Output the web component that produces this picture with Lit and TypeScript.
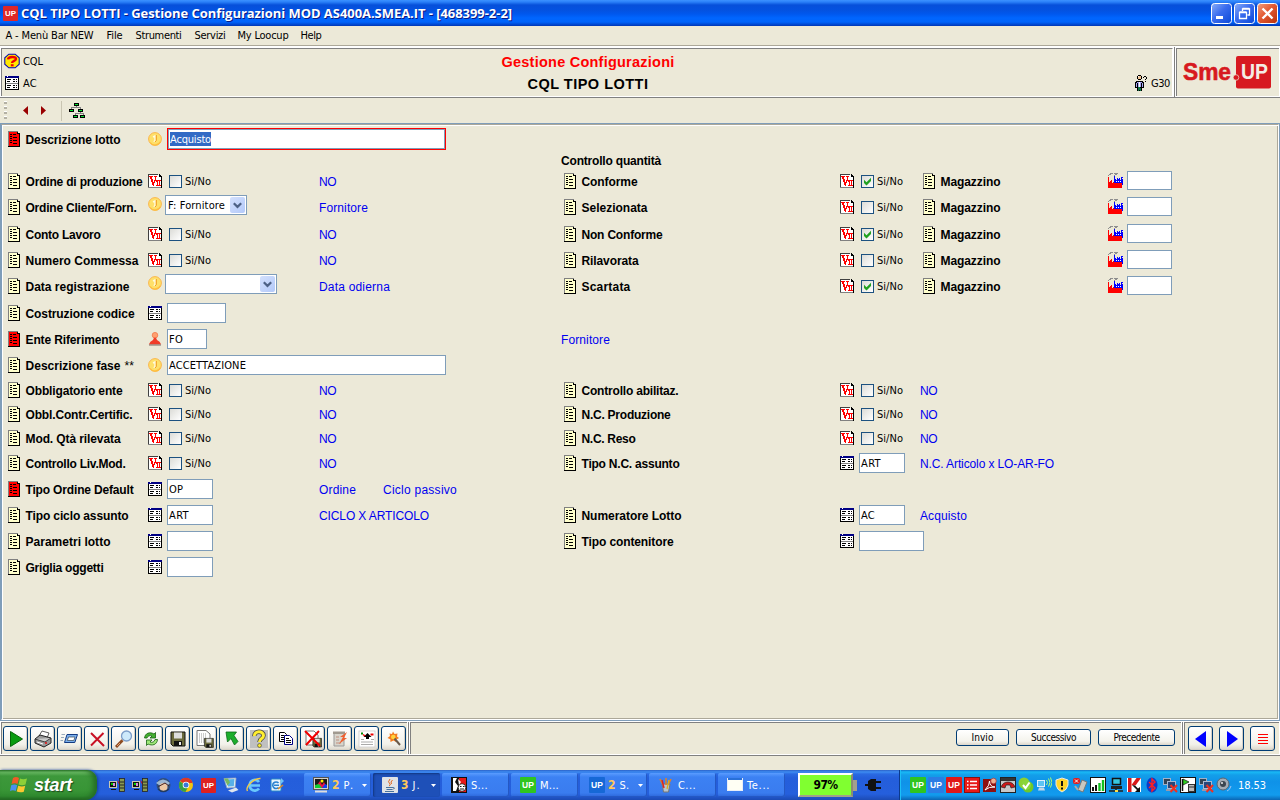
import { LitElement, html, svg, css, nothing } from "lit";
import { customElement, property } from "lit/decorators.js";

/* Text run whose letter spacing is adjusted so that it takes a given width. */
@customElement("fit-text")
class FitText extends LitElement {
  @property() text = "";
  @property({ type: Number }) w = 0;
  static styles = css`
    :host { display: block; white-space: pre; flex: none; }
    .run { display: inline-block; }
  `;
  render() { return html`<span class="run">${this.text}</span>`; }
  updated() {
    const s = this.renderRoot.querySelector(".run") as HTMLElement;
    s.style.letterSpacing = "0px";
    const n = s.getBoundingClientRect().width;
    if (this.w) s.style.letterSpacing = ((this.w - n) / this.text.length).toFixed(3) + "px";
  }
}

const fit = (text: string, w = 0, cls = "") => html`<fit-text class=${cls} .text=${text} .w=${w}></fit-text>`;

const PAL: Record<string, string> = {
  k: "#000", g: "#808080", y: "#ffffcc", w: "#fff", r: "#f00", n: "#000084", d: "#404040",
  b: "#0000ff", G: "#00e030", o: "#f4c898", v: "#a9a9f4", e: "#107848", c: "#8e8e8e",
};
/* Bitmap glyph: one character for each pixel, dots are transparent. */
const px = (rows: string[], over: Record<string, string> = {}) => {
  const w = Math.max(...rows.map((r) => r.length));
  const out: unknown[] = [];
  rows.forEach((row, y) => {
    let x = 0;
    while (x < row.length) {
      const c = row[x];
      let e = x + 1;
      while (e < row.length && row[e] === c) e++;
      if (c !== ".") out.push(svg`<rect x=${x} y=${y} width=${e - x} height="1" fill=${over[c] ?? PAL[c]}/>`);
      x = e;
    }
  });
  return html`<svg width=${w} height=${rows.length} viewBox="0 0 ${w} ${rows.length}" shape-rendering="crispEdges">${out}</svg>`;
};

const DOC = [
  "gggggggggg..",
  "gyyyyyyyyk..",
  "gyyyyyyyykkk",
  "gykkykkkyyyk",
  "gyyyyyyyyyyk",
  "gykkyyyyyyyk",
  "gyyyykkkkyyk",
  "gykkyyyyyyyk",
  "gyyyyyyyyyyk",
  "gykkykkkkyyk",
  "gyyyyyyyyyyk",
  "gykkyyyyyyyk",
  "gyyyykkkkyyk",
  "gyyyyyyyyyyk",
  "gyyyyyyyyyyk",
  "kkkkkkkkkkkk",
];
const doc = (red = false) => px(DOC, red ? { y: "#ff0000" } : {});
const table = () => px([
  "nnwnnnnnnnnnnn",
  "nnnnnnnnnnnnnn",
  "kwwwwwwwwwwwwk",
  "kwkkkkwwkkwkwk",
  "kwwwwwwwwwwwwk",
  "kwkkkwwwkkwkwk",
  "kwwwwwwwwwwwwk",
  "kggggggggggggk",
  "kwwwwwwwwwwwwk",
  "kwkkkkwwkkwkwk",
  "kwwwwwwwwwwwwk",
  "kwkkkwwwkkwkwk",
  "kwwwwwwwwwwwwk",
  "kkkkkkkkkkkkkk",
]);
const vee = () => px([
  "dddddddddd.k..",
  "dwwwwwwwwwwkk.",
  "drrrrwrrrwwkkk",
  "dwrrwwwrwwwwwk",
  "dwrrwwwrwwwwwk",
  "dwwrrwwrwwwwwk",
  "dwwrrwrrrrrrrk",
  "dwwrrwrwrrwrwk",
  "dwwwrrrwwrwrwk",
  "dwwwrrwwwrwrwk",
  "dwwwrrwwwrwrwk",
  "dwwwwrwwrrrrrk",
  "dwwwwwwwwwwwwk",
  "gggggggggggggk",
]);
const factory = () => px([
  "..ccc.cccc.....",
  ".cc....cc......",
  "c.....c........",
  "......b........",
  "r.....b......bb",
  "r.....b..b.b.b.",
  "r.....bb.bbb.bb",
  "r..r..bbbbbbbbb",
  "r.rr..bbwbwbwbb",
  "rrrr.rbbbbbbbbb",
  "rrrrrrrrrrrrrrb",
  "rrrrrrrrrrrrrrb",
  "rrrrrrrrrrrrrr.",
  "rrrrrrrrrrrrrr.",
  "rrrrrrrrrrrrrr.",
]);
const coin = () => html`<svg width="14" height="14" viewBox="0 0 14 14"><circle cx="7" cy="7" r="6.4" fill="#fee06a" stroke="#fab64d"/><path d="M2.2 10.5A6 6 0 0 0 12.5 9.5" stroke="#ffbe3e" stroke-width="1.2" fill="none"/><path d="M5 5L7 4V8.400Q6.800 9.500 5.600 9.400" stroke="#fffbe0" stroke-width="1.400" fill="none"/><path d="M8.300 3V8.500L7 10" stroke="#f09c20" stroke-width="1" fill="none"/></svg>`;
const person = () => html`<svg width="14" height="14" viewBox="0 0 14 14"><circle cx="7" cy="3.2" r="2.8" fill="#ffa070" stroke="#f07040" stroke-width=".7"/><path d="M.800 12.500Q2 9 5 8L6 5.800H8L9 8Q12 9 13.200 12.500Z" fill="#f03c28"/><path d="M1 13h12" stroke="#8a8078" stroke-width="1.2"/></svg>`;

const GLYPH: Record<string, () => unknown> = { V: vee, T: table, C: coin, P: person };

interface Half {
  label: string; lw: number; icon: string; red?: boolean;
  check?: boolean; input?: number; val?: string; vw?: number; combo?: number; star?: boolean; focus?: boolean;
  note?: string; nw?: number; note2?: string; mag?: boolean;
}
interface Row { h: number; left?: Half; right?: Half; head?: string; mid?: string; }

const ROWS: Row[] = [
  { h: 21, left: { label: "Descrizione lotto", lw: 95, icon: "C", red: true, input: 279, val: "Acquisto", vw: 41, focus: true } },
  { h: 21, head: "Controllo quantità" },
  { h: 26, left: { label: "Ordine di produzione", lw: 117, icon: "V", check: false, note: "NO", nw: 17 }, right: { label: "Conforme", lw: 56, icon: "V", check: true, mag: true } },
  { h: 27, left: { label: "Ordine Cliente/Forn.", lw: 111, icon: "C", combo: 82, val: "F: Fornitore", vw: 57, note: "Fornitore", nw: 49 }, right: { label: "Selezionata", lw: 66, icon: "V", check: false, mag: true } },
  { h: 26, left: { label: "Conto Lavoro", lw: 75, icon: "V", check: false, note: "NO", nw: 17 }, right: { label: "Non Conforme", lw: 81, icon: "V", check: true, mag: true } },
  { h: 26, left: { label: "Numero Commessa", lw: 113, icon: "V", check: false, note: "NO", nw: 17 }, right: { label: "Rilavorata", lw: 57, icon: "V", check: false, mag: true } },
  { h: 27, left: { label: "Data registrazione", lw: 104, icon: "C", combo: 112, note: "Data odierna", nw: 71 }, right: { label: "Scartata", lw: 49, icon: "V", check: true, mag: true } },
  { h: 26, left: { label: "Costruzione codice", lw: 109, icon: "T", input: 59 } },
  { h: 26, left: { label: "Ente Riferimento", lw: 94, icon: "P", red: true, input: 40, val: "FO", vw: 14 }, mid: "Fornitore" },
  { h: 25, left: { label: "Descrizione fase", lw: 95, icon: "C", star: true, input: 279, val: "ACCETTAZIONE", vw: 77 } },
  { h: 24, left: { label: "Obbligatorio ente", lw: 97, icon: "V", check: false, note: "NO", nw: 17 }, right: { label: "Controllo abilitaz.", lw: 97, icon: "V", check: false, note: "NO", nw: 17 } },
  { h: 24, left: { label: "Obbl.Contr.Certific.", lw: 107, icon: "V", check: false, note: "NO", nw: 17 }, right: { label: "N.C. Produzione", lw: 89, icon: "V", check: false, note: "NO", nw: 17 } },
  { h: 25, left: { label: "Mod. Qtà rilevata", lw: 95, icon: "V", check: false, note: "NO", nw: 17 }, right: { label: "N.C. Reso", lw: 54, icon: "V", check: false, note: "NO", nw: 17 } },
  { h: 26, left: { label: "Controllo Liv.Mod.", lw: 100, icon: "V", check: false, note: "NO", nw: 17 }, right: { label: "Tipo N.C. assunto", lw: 98, icon: "T", input: 46, val: "ART", vw: 20, note: "N.C. Articolo x LO-AR-FO", nw: 134 } },
  { h: 26, left: { label: "Tipo Ordine Default", lw: 108, icon: "T", red: true, input: 46, val: "OP", vw: 14, note: "Ordine", nw: 37, note2: "Ciclo passivo" } },
  { h: 26, left: { label: "Tipo ciclo assunto", lw: 103, icon: "T", input: 46, val: "ART", vw: 20, note: "CICLO X ARTICOLO", nw: 110 }, right: { label: "Numeratore Lotto", lw: 100, icon: "T", input: 46, val: "AC", vw: 14, note: "Acquisto", nw: 47 } },
  { h: 26, left: { label: "Parametri lotto", lw: 85, icon: "T", input: 46 }, right: { label: "Tipo contenitore", lw: 92, icon: "T", input: 65 } },
  { h: 26, left: { label: "Griglia oggetti", lw: 78, icon: "T", input: 46 } },
];

const svgi = (size: number, body: unknown) => html`<svg width=${size} height=${size} viewBox="0 0 20 20">${body}</svg>`;

const floppy = svg`<path d="M3 3H17V17H5L3 15Z" fill="#6b6a3c" stroke="#111"/><rect x="6" y="3.500" width="8" height="6" fill="#ddd"/><rect x="6" y="12" width="8" height="5" fill="#111"/><rect x="11" y="13" width="2" height="3" fill="#eee"/>`;
const TOOLS = [
  svgi(20, svg`<path d="M4.5 2.5L16.5 10L4.5 17.5Z" fill="#0a9c10" stroke="#046808"/>`),
  svgi(20, svg`<path d="M6 7L9 2L16 4L14 9Z" fill="#fff" stroke="#333" stroke-width=".8"/><path d="M2 10L7 6L18 9V14L11 18L2 14Z" fill="#999" stroke="#222"/><path d="M2 10L12 13L18 9" stroke="#222" fill="#ccc" stroke-width=".8"/><path d="M4 13l6 2" stroke="#fff"/><circle cx="13" cy="14" r=".9" fill="#e00"/>`),
  svgi(20, svg`<path d="M7 5.500H17.500L14.800 13.500H4.500Z" fill="#7cb0ee" stroke="#123a82"/><path d="M8.500 8H15L13.800 11.500H7.300Z" fill="#fff" stroke="#456" stroke-width=".8"/><path d="M1.500 5.500H5M1 8.500H4M.5 11.500H3" stroke="#9ab" stroke-width="1"/>`),
  svgi(20, svg`<path d="M4 4L17 17M16.500 4L4 16.500" stroke="#c81024" stroke-width="2" fill="none"/>`),
  svgi(20, svg`<circle cx="12.500" cy="7" r="5" fill="#cde9fb" stroke="#7b9cc8" stroke-width="1.300"/><path d="M2 18L8.500 11.200" stroke="#8c4a22" stroke-width="2.800"/><path d="M3 17L6 14" stroke="#e7a06c"/>`),
  svgi(20, svg`<path d="M3.500 9C4 4 9 2.500 13 5L14.500 3.500V9H9L11 7C9 6 6.500 7 6 9Z" fill="#44b030" stroke="#176012" stroke-width=".8"/><path d="M16.500 10.500C16 16 11 17 7 15L5.500 16.500V11H11L9 13C11 14 13.500 13 14 10.500Z" fill="#9ee878" stroke="#176012" stroke-width=".8"/>`),
  svgi(20, floppy),
  svgi(20, svg`<path d="M2 1.500H11L15 5V16.500H2Z" fill="#fff" stroke="#777"/><path d="M4 5h7M4 7h8M4 9h8M4 11h5M4 13h5" stroke="#999" stroke-dasharray="1 1"/><g transform="translate(7.500 7.500) scale(.64)">${floppy}</g>`),
  svgi(20, svg`<path d="M4 3H14.500L12 6.500L16 12.500L12.500 16L9 9.500L5.500 13Z" fill="#1cae2c" stroke="#0a6a18" stroke-width=".8"/>`),
  svgi(20, svg`<rect x="1" y="1" width="18" height="18" fill="#c0c0c0"/><path d="M5.500 7C5 1.500 14.500 1.500 14.500 6.500C14.500 10 10.500 9 10.500 13" fill="none" stroke="#444" stroke-width="4.500"/><path d="M5.500 7C5 1.500 14.500 1.500 14.500 6.500C14.500 10 10.500 9 10.500 13" fill="none" stroke="#ffee30" stroke-width="3"/><circle cx="10.500" cy="16.500" r="1.900" fill="#ffee30" stroke="#444" stroke-width=".7"/>`),
  svgi(20, svg`<path d="M3.500 3.500H8.500L10.500 5.500V12.500H3.500Z" fill="#fff" stroke="#000"/><path d="M8.500 6.500H13.500L16.500 9.500V15.500H8.500Z" fill="#fff" stroke="#000084"/><path d="M5 6.500h3M5 8.500h3M5 10.500h3M10 9.500h3M10 11.500h5M10 13.500h5" stroke="#000"/>`),
  svgi(20, svg`<path d="M3 2H11L15 6V16H3Z" fill="#fff" stroke="#777"/><g transform="translate(8 7.500) scale(.62)">${floppy}</g><path d="M2 2L17 17M16 2L3 16" stroke="#f00000" stroke-width="2"/>`),
  svgi(20, svg`<path d="M4 4H14V17H4Z" fill="#d8d5cc" stroke="#999"/><rect x="3" y="2.500" width="12" height="2.500" fill="#a09a90"/><path d="M6 8h3M6 11h3M6 14h5" stroke="#c09080"/><path d="M17 3L10 8H13L9 15L17 9H14Z" fill="#f06030"/>`),
  svgi(20, svg`<rect x="2" y="2" width="16" height="16" fill="#fff" stroke="#ccc" stroke-width=".8"/><path d="M10.500 4L14.500 8H12V10H9V8H6.500Z" fill="#000"/><rect x="4" y="3.500" width="2" height="2" fill="#080"/><path d="M6 5.500l2 1.500" stroke="#e00" stroke-width="1.500"/><rect x="13.500" y="4.500" width="3" height="2" fill="#e00"/><path d="M4 10.500h3M14 10.500h3M4 13h12M4 15.500h12" stroke="#aaa"/>`),
  svgi(20, svg`<path d="M9 2.500L10.500 5L13.500 4.500L13 7.500L15 9L12.500 10.500L12 13L9.500 11.500L6.500 13L6.300 10.300L3.500 9L6 7L5.500 4.500L8 5Z" fill="#f47c20"/><circle cx="9.300" cy="8" r="2.300" fill="#ffd23c"/><path d="M10.500 9.500L16 16" stroke="#6a5a4a" stroke-width="2"/>`),
];

const up = (bg: string, s = 16) => html`<svg width=${s} height=${s} viewBox="0 0 16 16"><rect width="16" height="16" rx="1" fill=${bg}/><text x="8" y="11" text-anchor="middle" font-family="Liberation Sans" font-weight="700" font-size="8.500" fill="#fff">UP</text></svg>`;
const s16 = (b: unknown) => html`<svg width="16" height="16" viewBox="0 0 16 16">${b}</svg>`;
const pcs = s16(svg`<rect x=".5" y="4.500" width="7" height="6" fill="#111" stroke="#c8c8b0"/><rect x="2" y="6" width="2" height="2" fill="#0c0"/><rect x="4" y="6" width="2" height="3" fill="#d8d"/><path d="M2 12.500h5" stroke="#111"/><path d="M8 3L11 6V9Z" fill="#e00"/><rect x="10.500" y="1.500" width="5" height="13" fill="#8a9a50" stroke="#222" stroke-width=".8"/><path d="M11 5h4M11 8h4M11 11h4" stroke="#222"/>`);
const QUICK = [
  pcs, pcs,
  s16(svg`<circle cx="8.500" cy="8" r="7" fill="#2f4f7c"/><path d="M1 6Q8 -1 15 6L12 9L4 8Z" fill="#9db8d2"/><circle cx="8.500" cy="10" r="4" fill="#eec9a4"/><path d="M3.500 9.500L10 6L14 9" stroke="#422" fill="none"/><path d="M3 12q5 5 11 0" stroke="#223a60" fill="none" stroke-width="1.500"/>`),
  s16(svg`<circle cx="8" cy="8" r="7" fill="#f2c60e"/><path d="M8 8L2 4A7 7 0 0 1 14.500 5.500L14 6H8Z" fill="#dc3828"/><path d="M8 8L1.800 4.500A7 7 0 0 0 7.500 15L10 10Z" fill="#38a044"/><circle cx="8" cy="8" r="3.300" fill="#fff"/><circle cx="8" cy="8" r="2.500" fill="#3b78d8"/>`),
  up("#dd2020", 15),
  s16(svg`<path d="M1 1.500L13 1L12 10.500L4 11Z" fill="#e8f2f8" stroke="#9ab" stroke-width=".8"/><path d="M3 2.500L11.500 2L10.800 9.200L5 9.500Z" fill="#58b0e8"/><path d="M1 1.500h4l2 4l-2.500 3Z" fill="#78b860"/><path d="M5 13.500L13 10.500L15.500 13L9 15.500Z" fill="#dfe6ee"/>`),
  s16(svg`<path d="M13 5A5.300 5.300 0 1 0 13 11.500M3.500 8.500H14" fill="none" stroke="#6ac8fc" stroke-width="2.700"/><path d="M1.500 14C-1 10 8 1 14.500 1.500" fill="none" stroke="#f1c848" stroke-width="1.400"/>`),
  s16(svg`<rect x="2" y="2" width="10" height="12" rx="1" fill="#e9f4fc" stroke="#2688c8"/><path d="M9.500 6A3.300 3.300 0 1 0 9.500 10.500M5 8.300H10" stroke="#2a82d0" stroke-width="1.600" fill="none"/><path d="M12 1L15 4L12 7Z" fill="#6ac0f8"/><path d="M9 12L14 8" stroke="#e08a20" stroke-width="1.600"/>`),
];
const TASKS = [
  { cls: "", t: "P.", n: "2", tw: 12, d: true, i: s16(svg`<rect x=".5" y=".5" width="15" height="12" fill="#d4d0c8" stroke="#555"/><rect x="2" y="2" width="12" height="9" fill="#181818"/><path d="M2 11L7 4L9 8L11 5L14 11Z" fill="#f01040"/><path d="M2 11V8L6 7L9 11Z" fill="#10d030"/><path d="M9 11L12 7L14 8V11Z" fill="#1040f0"/><circle cx="9" cy="4" r="1.500" fill="#fe0"/><path d="M2 14.500h12" stroke="#ddd" stroke-width="2"/>`) },
  { cls: "on", t: "J.", n: "3", tw: 8, d: true, i: s16(svg`<rect width="16" height="16" rx="1" fill="#dfe3e6"/><path d="M8 2Q5 5 8 7Q9 8 7 9M10.500 3Q8 5 9.500 7" stroke="#e06820" fill="none"/><path d="M4 10.500h7M4.500 12.500h6M3 14.500h9M11 10.500q3 0 0 2" stroke="#47729c" fill="none"/>`) },
  { cls: "", t: "S...", tw: 17, i: s16(svg`<rect width="16" height="16" fill="#111"/><rect x="8" y="1" width="7" height="14" fill="#e81818"/><path d="M2 1H6L4 5L7 9L5 14H2Z" fill="#fff"/><circle cx="11" cy="10.500" r="3.800" fill="#fff" stroke="#111" stroke-width=".8"/><path d="M9 9.500h1.500M12 9.500h1.500M9 12h4" stroke="#111"/><path d="M7 2L10 5L8 8Z" fill="#fff"/>`) },
  { cls: "", t: "M...", tw: 19, i: up("#2fc51f") },
  { cls: "", t: "S.", n: "2", tw: 10, d: true, i: up("#1668d6") },
  { cls: "", t: "C...", tw: 18, i: s16(svg`<path d="M4 7H12L10.500 15H5.500Z" fill="#b8c4cc" stroke="#777"/><path d="M5 8L2 2M8 8V1M10 8L13 2" stroke="#e08028" stroke-width="1.600"/><path d="M6 11L4 3" stroke="#d22" stroke-width="1.400"/><path d="M9 12L11 3" stroke="#d8b020" stroke-width="1.300"/>`) },
  { cls: "", t: "Te...", tw: 23, i: s16(svg`<rect x=".5" y="1.500" width="15" height="12" fill="#fffff4" stroke="#e8eef8"/><rect x="1" y="1" width="14" height="2" fill="#2870d8"/>`) },
];
const netx = s16(svg`<rect x="1.500" y="1.500" width="7" height="6" fill="#345" stroke="#9fb0c8"/><rect x="5.500" y="4.500" width="8" height="7" fill="#27487c" stroke="#a9b8d0"/><path d="M4 13h7" stroke="#99a" stroke-width="2"/><path d="M8.500 8L15 15M15 8L8.500 15" stroke="#f03020" stroke-width="2"/>`);
const TRAY = [
  up("#2fc51f"), up("#2a7de4"), up("#e01818"),
  s16(svg`<rect x=".5" y=".5" width="15" height="15" fill="#e81818" stroke="#811"/><path d="M3 4.500h1.500M6 4.500h7M3 8h1.500M6 8h7M3 11.500h1.500M6 11.500h7" stroke="#fff" stroke-width="1.700"/>`),
  s16(svg`<rect x="1" y="2" width="13" height="13" fill="#8e1010"/><path d="M3 13Q8 8 7.500 4Q8 10 13 10Q7 9.500 3 13" stroke="#fff" fill="none"/><circle cx="11.500" cy="4" r="2.800" fill="#f0b090" stroke="#a33" stroke-width=".7"/>`),
  s16(svg`<rect x=".5" y=".5" width="15" height="15" fill="#c8c8c8" stroke="#222"/><rect x="1" y="1" width="14" height="3" fill="#333"/><path d="M1 10Q3 5 8 5Q13 5 15 10L11 11L10 8H6L5 11Z" fill="#d01818" stroke="#222" stroke-width=".7"/>`),
  s16(svg`<circle cx="6" cy="6" r="5.500" fill="#8cd030"/><circle cx="10" cy="10" r="5.500" fill="#6ec92a"/><circle cx="8" cy="8" r="5" fill="#8ad53a"/><path d="M5 8l2.500 3L11.500 5.500" stroke="#fff" stroke-width="2" fill="none"/>`),
  s16(svg`<rect x="1.500" y="3.500" width="7" height="6" fill="#5cc4f4" stroke="#e0f0ff"/><path d="M2 13.500h7l-1-3H3Z" fill="#c4d8e8"/><path d="M10.500 3q2 2.500 0 5M12.500 1.500q3 4 0 8M14.500 .5q3 5 0 10" stroke="#b0ff70" fill="none"/>`),
  s16(svg`<path d="M8 1L14 3V8Q13 13 8 15Q3 13 2 8V3Z" fill="#ffd42a" stroke="#e8e8e8"/><path d="M8 4V9M8 10.500V12.500" stroke="#111" stroke-width="2"/>`),
  s16(svg`<path d="M6 13L10 3L15 5L11 15Z" fill="#c8c8c0" stroke="#777"/><rect x="1" y="1" width="7" height="6" rx="2" fill="#e02020"/><path d="M3 2.500l3 3M6 2.500l-3 3" stroke="#fff"/><path d="M6 13L3 9" stroke="#aaa" stroke-width="2"/>`),
  s16(svg`<rect x=".5" y=".5" width="15" height="15" fill="#fff" stroke="#111"/><path d="M3 14v-4M6 14V8" stroke="#111" stroke-width="2"/><path d="M9.500 14V6M13 14V3" stroke="#10c020" stroke-width="2.400"/>`),
  s16(svg`<rect x="4.500" y="1.500" width="8" height="6" fill="#38c8e0" stroke="#111" stroke-width="1.500"/><rect x="3" y="9" width="11" height="3" fill="#222"/><path d="M1 14h14M8 12v3" stroke="#222" stroke-width="1.500"/><path d="M7 14h3" stroke="#fd4" stroke-width="2"/>`),
  s16(svg`<path d="M1 1H15V15H1Z" fill="#fff"/><path d="M2 1h3.500v14H2Z" fill="#d81818"/><path d="M5.500 8L10.500 1H15L9.500 8.500Z" fill="#d81818"/><path d="M6 8L9 8.500L12 11.500L14 10V15H9L11 13Z" fill="#111"/>`),
  s16(svg`<ellipse cx="8" cy="8" rx="5.500" ry="7.500" fill="#0a3ccb"/><path d="M5 5L11 11L8 14V2L11 5L5 11" stroke="#ff2020" stroke-width="1.400" fill="none"/>`),
  netx,
  s16(svg`<rect x=".5" y=".5" width="15" height="15" fill="#fff" stroke="#111"/><path d="M2.500 2v12" stroke="#111" stroke-width="1.500"/><path d="M3 2L9 5L3 8Z" fill="#30d020" stroke="#111" stroke-width=".7"/><rect x="8.500" y="7.500" width="6" height="7" fill="#bbb" stroke="#333"/><path d="M9 10h5" stroke="#333"/>`),
  netx,
  s16(svg`<circle cx="7" cy="7" r="6" fill="#a4acb4" stroke="#5a6470"/><circle cx="7" cy="7" r="3" fill="#3c4650"/><circle cx="6" cy="6" r="1" fill="#eee"/><path d="M11 14q3-1 4-5" stroke="#9fc4f4" fill="none"/>`),
];

@customElement("app-root")
class AppRoot extends LitElement {
  static styles = css`
    :host { display: block; width: 1280px; height: 800px; overflow: hidden; background: #ece9d8; color: #000;
      font: 11px/14px "DejaVu Sans Condensed", "DejaVu Sans", sans-serif; }
    * { box-sizing: border-box; }
    svg { display: block; flex: none; }
    .screen { display: flex; flex-direction: column; height: 800px; }
    .title { height: 26px; display: flex; align-items: center; padding: 0 3px 0 3px; flex: none;
      background: linear-gradient(#3c92ff 0, #2a80f8 2px, #0650da 5px, #0452e0 10px, #0058ee 14px, #0066ff 18px, #0064fb 22px, #0042c8 25px, #0036b4 26px); }
    .title .cap { margin-left: 3px; color: #fff; font: 700 13px/16px "Open Sans", sans-serif; text-shadow: 1px 1px 0 #0a1883; }
    .grow { flex: 1; }
    .wbtns { display: flex; gap: 2px; margin-right: -1px; }
    .menu { height: 20px; flex: none; display: flex; padding: 3px 0 0 5.5px; border-bottom: 1px solid #aca899; }
    .menu .m1 { width: 101px; } .menu .m2 { width: 29px; } .menu .m3 { width: 59px; } .menu .m4 { width: 43px; } .menu .m5 { width: 63px; }
    .head { height: 52px; flex: none; display: flex; padding-top: 1px; background: #fff; border-bottom: 1px solid #808080; }
    .hbox { border: solid #808080; border-width: 1px 0 0 1px; background: #ece9d8; margin: 1px 1px 1px 1px; }
    .hmain { width: 1172px; display: grid; grid-template-columns: 430px 312px 1fr; border-right: 1px solid #fff; }
    .hlogo { width: 103px; padding: 6px 0 0 6px; }
    .sep { width: 1px; background: #808080; }
    .hl { padding: 4px 0 0 2px; }
    .hrow { display: flex; align-items: center; gap: 3px; height: 16px; margin-bottom: 6px; }
    .hrow fit-text { padding-top: 2px; }
    .hico { width: 16px; display: flex; justify-content: center; }
    .hc { text-align: center; display: flex; flex-direction: column; align-items: center; font: 700 14.500px/18px "Liberation Sans", sans-serif; padding-top: 4px; gap: 4px; }
    .red { color: #f00; }
    .hr { display: flex; justify-content: flex-end; align-items: flex-start; padding: 26px 2px 0 0; gap: 4px; }
    .hr fit-text { margin-top: 2px; }
    .bar { height: 25px; flex: none; display: flex; align-items: center; }
    .grip { width: 3px; height: 19px; margin-left: 4px; background: repeating-linear-gradient(#fff 0 1px, #b4b1a4 1px 3px, transparent 3px 5px); }
    .arr { margin-left: 16px; } .arr2 { margin-left: 13px; }
    .vline { width: 1px; height: 20px; background: #c9c5b2; margin: 0 7px 0 15px; }
    .panel { height: 598px; flex: none; border: 1px solid #7f9db9; }
    .inner { height: 596px; border: solid; border-width: 1px; border-color: #aca899 #fff #fff #7f9db9; box-shadow: inset 1px 1px 0 #fff, inset -1px -1px 0 #aca899; padding: 3px 0 0 6px; }
    .row { display: flex; align-items: flex-start; }
    .half { display: flex; height: 22px; align-items: center; flex: none; }
    .left { width: 553px; }
    .right { width: 700px; padding-left: 3px; }
    .lab { width: 128px; padding: 2px 0 0 5.5px; display: flex; flex: none; font: 700 12px/14px "Liberation Sans", sans-serif; }
    .star { font-weight: 400; margin-left: 4px; }
    .ico { width: 19px; flex: none; }
    .right .lab { width: 264px; }
    .field { width: 152px; display: flex; align-items: center; flex: none; }
    .right .field { width: 61px; }
    .yn { padding-top: 1.5px; }
    .note, .mid { color: #0000f0; font: 12px/14px "Liberation Sans", sans-serif; display: flex; padding-top: 2px; }
    .note .second { margin-left: 27px; }
    .mid { padding-top: 5px; }
    .secthead { font: 700 12px/14px "Liberation Sans", sans-serif; padding-top: 5px; }
    .mag { display: flex; align-items: center; margin-left: 3px; }
    .right .mag .lab { width: 173px; }
    .mico { width: 19px; margin-top: -2px; }
    .cb { width: 13px; height: 13px; border: 1px solid #1c5180; margin: 1px 3px 0 2px; background: linear-gradient(135deg, #dcdcd7, #fff); flex: none; }
    .inp { height: 20px; border: 1px solid #7f9db9; background: #fff; padding: 3px 1px 0; flex: none; line-height: 13px; }
    .low { height: 19px; width: 45px; margin-top: -1px; }
    .focus { height: 22px; border-color: #f00; box-shadow: inset 0 0 0 1px #7f9db9; padding: 3px 2px 0; display: flex; }
    .focus fit-text { background: #316ac5; color: #fff; height: 14px; line-height: 15px; }
    .combo { height: 20px; border: 1px solid #7f9db9; background: #fff; display: flex; justify-content: space-between; align-items: center; padding: 0 1px 0 2px; margin: -4px 0 0 -2px; flex: none; }
    .combo fit-text { padding-top: 1px; }
    .drop { width: 15px; height: 16px; border-radius: 2px; background: linear-gradient(135deg, #d3e0fd, #b3c9f9); display: flex; align-items: center; justify-content: center; }
    .ico.up { margin-top: -6px; }
    .foot { height: 35px; flex: none; display: flex; background: #fff; border-bottom: 1px solid #808080; padding: 1px 1px 1px 1px; }
    .fbox { background: #ece9d8; border: solid #808080; border-width: 1px 0 0 1px; display: flex; }
    .f1 { width: 406px; padding: 3px 0 0 1px; gap: 2px; }
    .f2 { width: 771px; margin-left: 1px; justify-content: flex-end; gap: 7px; padding: 6px 6px 0 0; }
    .f3 { width: 95px; margin-left: 1px; padding: 3px 0 0 3px; gap: 6px; }
    .fsep { width: 1px; background: #808080; margin-left: 1px; }
    .tb { width: 25px; height: 25px; border: 1px solid #003c74; border-radius: 3px; background: linear-gradient(#fff, #f2f1ea 75%, #dcd7cb); display: flex; align-items: center; justify-content: center; flex: none; box-shadow: inset -1px -1px 0 #d6d0c5; }
    .pb { height: 17px; border: 1px solid #003c74; border-radius: 3px; background: linear-gradient(#fff, #f4f3ec 75%, #dcd7cb); display: flex; justify-content: center; line-height: 16px; flex: none; font-size: 10px; }
    .p1 { width: 53px; } .p2 { width: 75px; } .p3 { width: 77px; }
    .gap { height: 14px; flex: none; }
    .task { height: 30px; flex: none; display: flex; background: linear-gradient(#2c62c8 0, #3d8cf2 2px, #2a6ae2 4px, #245edb 8px, #255fdc 24px, #1c4bb4 30px); color: #fff; align-items: center; }
    .start { width: 97px; height: 30px; border-radius: 0 10px 12px 0; display: flex; align-items: center; padding-left: 10px; gap: 5px;
      background: linear-gradient(#2f7a2d 0, #6fbf68 2px, #3d983b 6px, #389536 20px, #2f8a2f 26px, #1f641f 30px); box-shadow: inset -4px 0 5px #256e25, 1px 0 3px #123c9c; }
    .start fit-text { font: italic 700 18px/22px "Liberation Sans", sans-serif; text-shadow: 1px 1px 1px #1b4a1b; }
    .quick { display: flex; gap: 7px; margin-left: 12px; width: 195px; align-items: center; }
    .tasks { display: flex; gap: 2px; width: 494px; }
    .tk { width: 67px; height: 24px; border-radius: 2px; background: linear-gradient(#5a9cff 0, #3c81f3 4px, #3a7cef 20px, #2b65d8 24px); box-shadow: inset -1px -1px 0 #2458c4; display: flex; align-items: center; padding-left: 9px; gap: 4px; flex: none; }
    .on { background: #1e50b8; box-shadow: inset 1px 1px 2px #12357f; }
    .tk b { color: #ffc85a; font: 700 12px/14px "DejaVu Sans Condensed", sans-serif; margin-left: -1px; }
    .tk fit-text { margin-top: 1px; }
    .dn { margin-left: auto; margin-right: 4px; }
    .bat { width: 55px; height: 24px; border: 2px solid #fff; border-right-color: #8b8b74; border-bottom-color: #a0a08a; background: #80ff30; color: #000; display: flex; justify-content: center; font: 700 12px/20px "DejaVu Sans Condensed", sans-serif; }
    .nub { width: 4px; height: 11px; background: #a3a08d; }
    .plug { margin-left: 8px; }
    .tray { margin-left: auto; width: 381px; height: 30px; background: linear-gradient(#1170c8 0, #18b9f6 2px, #139ee9 5px, #0f92e8 12px, #129bee 25px, #0b66b4 30px); border-left: 1px solid #0b3a8c; box-shadow: inset 1px 0 0 #1cc0f8; display: flex; align-items: center; gap: 2px; padding-left: 10px; }
    .clock { margin-left: 4px; margin-top: 1px; }
  `;

  half(h: Half, side: string) {
    return html`
      <div class="half ${side}">
        ${doc(h.red)}
        <div class="lab">${fit(h.label, h.lw)}${h.star ? html`<span class="star">**</span>` : nothing}</div>
        <div class="ico ${h.combo ? "up" : ""}">${GLYPH[h.icon]()}</div>
        <div class="field">
          ${h.check !== undefined ? html`<span class="cb">${h.check ? html`<svg width="11" height="11" viewBox="0 0 11 11"><path d="M2 3.800L4.500 6.300L9 1.800V5L4.500 9.500L2 7Z" fill="#21a121"/></svg>` : nothing}</span>${fit("Si/No", 26, "yn")}` : nothing}
          ${h.input ? html`<div class="inp ${h.focus ? "focus" : ""}" style="width:${h.input}px">${h.val ? fit(h.val, h.vw) : nothing}</div>` : nothing}
          ${h.combo ? html`<div class="combo" style="width:${h.combo}px">${fit(h.val ?? "", h.vw)}<span class="drop"><svg width="9" height="7" viewBox="0 0 9 7"><path d="M.800 1.200L4.500 4.900L8.200 1.200" stroke="#4d6185" stroke-width="2.200" fill="none"/></svg></span></div>` : nothing}
        </div>
        ${h.note ? html`<div class="note">${fit(h.note, h.nw)}${h.note2 ? fit(h.note2, 74, "second") : nothing}</div>` : nothing}
        ${h.mag ? html`<div class="mag">${doc()}<div class="lab">${fit("Magazzino", 60)}</div><div class="mico">${factory()}</div><div class="inp low"></div></div>` : nothing}
      </div>`;
  }

  row(r: Row) {
    return html`<div class="row" style="height:${r.h}px">
      ${r.left ? this.half(r.left, "left") : html`<div class="half left"></div>`}
      ${r.head ? html`<div class="secthead">${fit(r.head, 100)}</div>` : nothing}
      ${r.mid ? html`<div class="mid">${fit(r.mid, 49)}</div>` : nothing}
      ${r.right ? this.half(r.right, "right") : nothing}
    </div>`;
  }

  wbtn(kind: string) {
    const x = kind === "x";
    return html`<svg width="21" height="21" viewBox="0 0 21 21">
      <defs><linearGradient id="face-${kind}" x2="1" y2="1"><stop stop-color=${x ? "#f0a080" : "#8aaef8"}/><stop offset=".45" stop-color=${x ? "#e35a32" : "#3a6cee"}/><stop offset="1" stop-color=${x ? "#b8300a" : "#0a48d8"}/></linearGradient></defs>
      <rect x=".5" y=".5" width="20" height="20" rx="3" fill="url(#face-${kind})" stroke="#fff"/>
      ${kind === "m" ? svg`<rect x="5" y="13" width="7" height="3" fill="#fff"/>` : nothing}
      ${kind === "r" ? svg`<path d="M8.500 8V6H15.500V12H13.500M8.500 5.500H15.500M5.500 9.500H12.500V15.500H5.500ZM5.500 9H12.500" stroke="#fff" stroke-width="1.300" fill="none"/>` : nothing}
      ${x ? svg`<path d="M5.500 5.500L15.500 15.500M15.500 5.500L5.500 15.500" stroke="#fff" stroke-width="2.400"/>` : nothing}
    </svg>`;
  }

  render() {
    return html`<div class="screen">
      <div class="title">${up("#e02828", 15)}${fit("CQL TIPO LOTTI - Gestione Configurazioni MOD AS400A.SMEA.IT - [468399-2-2]", 491, "cap")}<span class="grow"></span>
        <div class="wbtns">${this.wbtn("m")}${this.wbtn("r")}${this.wbtn("x")}</div></div>
      <div class="menu">
        ${fit("A - Menù Bar NEW", 88, "m1")}${fit("File", 16, "m2")}${fit("Strumenti", 46, "m3")}${fit("Servizi", 31, "m4")}${fit("My Loocup", 51, "m5")}${fit("Help", 21)}
      </div>
      <div class="head">
        <div class="hbox hmain">
          <div class="hl">
            <div class="hrow">${svgi(16, svg`<path d="M6 1.500H14L19 6V14L14 18.500H6L1 14V6Z" fill="#ffe800" stroke="#0000b0" stroke-width="1.300"/><path d="M5 8C5.500 4 15 4 15 7.500C15 10 10 9.500 10 12.500" stroke="#f00000" stroke-width="3" fill="none"/><rect x="8.500" y="14" width="3.500" height="2.700" fill="#f00000"/>`)}${fit("CQL", 20)}</div>
            <div class="hrow"><span class="hico">${table()}</span>${fit("AC", 14)}</div>
          </div>
          <div class="hc">${fit("Gestione Configurazioni", 173, "red")}${fit("CQL TIPO LOTTI", 121)}</div>
          <div class="hr">${px([
            "...kkk......", "..kwook..kk.", "..koook.k..k", "..koook....k", "...kkk....k.", "............", ".kkkkkkk..k.", "kkvvwvvkk...",
            "kvkvwvkvk...", "kvkvwvkvk...", "kvkvwvkvk...", "kvkvwvkvk...", "kkkeekkkk...", "..keeek.....", "..keeek.....", "..kekek.....",
          ])}${fit("G30", 19)}</div>
        </div>
        <div class="sep"></div>
        <div class="hbox hlogo"><svg width="92" height="36" viewBox="0 0 92 36"><rect x="53" y="1" width="35" height="32.500" rx="2" fill="#d71920"/><text x="0" y="24.500" font-family="Liberation Sans" font-weight="700" font-size="24.500" fill="#d71920" stroke="#d71920" stroke-width=".6" textLength="48" lengthAdjust="spacingAndGlyphs">Sme</text><circle cx="53" cy="22.500" r="2.800" fill="#d71920" stroke="#ece9d8" stroke-width=".7"/><text x="58" y="24" font-family="Liberation Sans" font-weight="700" font-size="21.500" fill="#f4ece4" textLength="27" lengthAdjust="spacingAndGlyphs">UP</text></svg></div>
      </div>
      <div class="bar">
        <span class="grip"></span>
        <svg class="arr" width="5" height="9" viewBox="0 0 5 9"><path d="M5 0V9L0 4.500Z" fill="#900"/></svg>
        <svg class="arr2" width="5" height="9" viewBox="0 0 5 9"><path d="M0 0V9L5 4.500Z" fill="#900"/></svg>
        <span class="vline"></span>
        ${px([
          ".....kkkkk......", ".....kGGGk......", ".....kkkkk......", ".......g........", "..gggggggggg....", "..g........g....", "kkkkk....kkkkk..", "kGGGk....kGGGk..",
          "kkkkk....kkkkk..", "...........g....", "......ggggggggg.", "......g.......g.", "....kkkkk..kkkkk", "....kGGGk..kGGGk", "....kkkkk..kkkkk",
        ])}
      </div>
      <div class="panel"><div class="inner">${ROWS.map((r) => this.row(r))}</div></div>
      <div class="foot">
        <div class="fbox f1">${TOOLS.map((t) => html`<span class="tb">${t}</span>`)}</div>
        <span class="fsep"></span>
        <div class="fbox f2">
          <span class="pb p1">${fit("Invio", 22)}</span><span class="pb p2">${fit("Successivo", 45)}</span><span class="pb p3">${fit("Precedente", 46)}</span>
        </div>
        <span class="fsep"></span>
        <div class="fbox f3">
          <span class="tb">${svgi(20, svg`<path d="M15 2V18L4 10Z" fill="#00f"/>`)}</span>
          <span class="tb">${svgi(20, svg`<path d="M5 2V18L16 10Z" fill="#00f"/>`)}</span>
          <span class="tb">${svgi(20, svg`<path d="M5 5.500H15M5 8.500H15M5 11.500H15M5 14.500H15" stroke="#f00"/>`)}</span>
        </div>
      </div>
      <div class="gap"></div>
      <div class="task">
        <div class="start"><svg width="19" height="18" viewBox="0 0 19 18"><path d="M3 2Q6 0 9 2L7.500 8Q5 6.500 1.500 8Z" fill="#f05a28"/><path d="M10 2.500Q13 4 17 2.500L15.500 8.500Q12 10 8.500 8.500Z" fill="#8cd038"/><path d="M1.200 9.300Q4.500 7.800 7.200 9.300L5.700 15Q3 13.500 0 15Z" fill="#4a90f0"/><path d="M8.200 9.800Q12 11.300 15.200 9.800L13.800 15.800Q10 17 6.700 15.500Z" fill="#fcc830"/></svg>${fit("start", 38)}</div>
        <div class="quick">${QUICK}</div>
        <div class="tasks">${TASKS.map((t) => html`<div class="tk ${t.cls}">${t.i}${t.n ? html`<b>${t.n}</b>` : nothing}${fit(t.t, t.tw)}${t.d ? html`<svg class="dn" width="5" height="3" viewBox="0 0 5 3"><path d="M0 0H5L2.500 3Z" fill="#fff"/></svg>` : nothing}</div>`)}</div>
        <div class="bat">${fit("97%", 24)}</div><span class="nub"></span>
        <svg class="plug" width="17" height="14" viewBox="0 0 17 14"><path d="M0 6H3V3L6 1H11V13H6L3 11V8H0Z" fill="#111"/><path d="M11 4H16M11 10H16" stroke="#111" stroke-width="2"/></svg>
        <div class="tray">${TRAY}${fit("18.53", 28, "clock")}</div>
      </div>
    </div>`;
  }
}
